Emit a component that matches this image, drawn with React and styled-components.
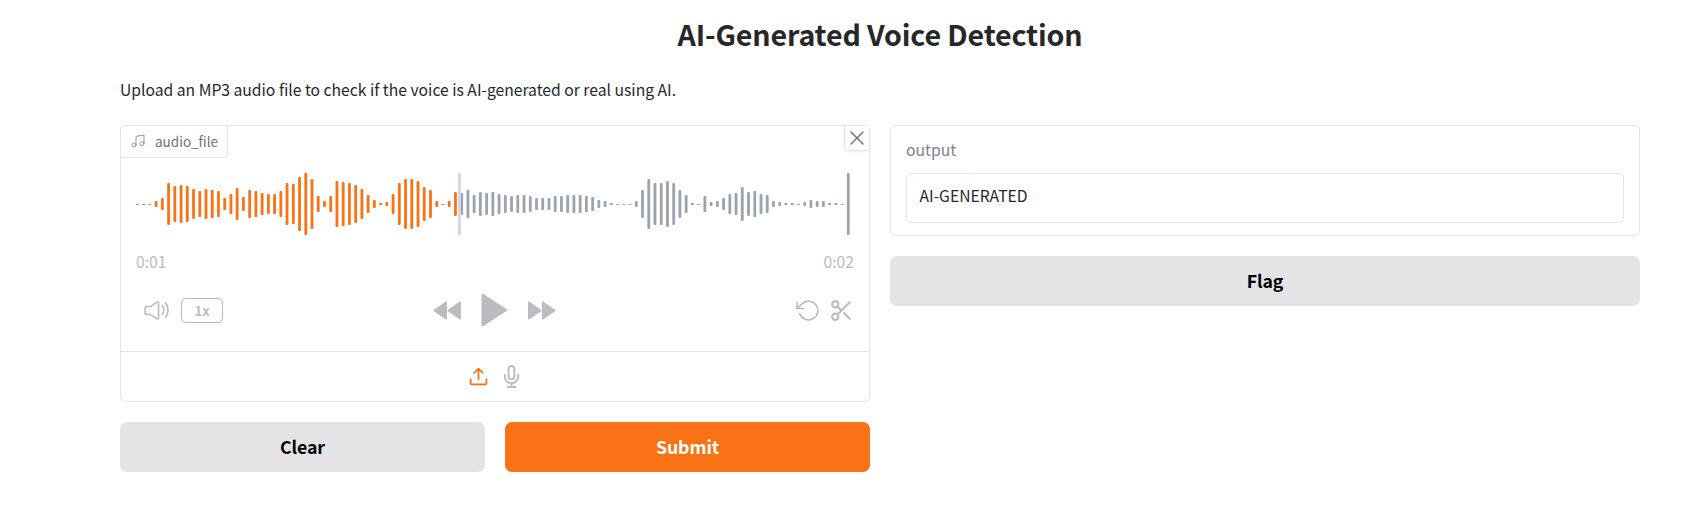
import React from "react";
import styled, { createGlobalStyle } from "styled-components";

const Global = createGlobalStyle`
  * { box-sizing: border-box; }
  body {
    margin: 0;
    background: #fff;
    color: #27272a;
    font-family: "Source Sans Pro", "Noto Sans CJK SC", "Noto Sans", sans-serif;
  }
  svg { display: block; flex: none; }
`;

const Page = styled.main`
  width: 1520px;
  margin-left: 120px;
  padding-top: 13px;
`;
const Title = styled.h1`
  margin: 0;
  height: 42px;
  line-height: 42px;
  text-align: center;
  font-size: 28.6px;
  font-weight: 600;
  letter-spacing: -0.14px;
`;
const Description = styled.p`
  margin: 22px 0 0;
  height: 26px;
  line-height: 26px;
  font-size: 15.68px;
`;
const Columns = styled.div`
  display: flex;
  align-items: flex-start;
  gap: 20px;
  margin-top: 22px;
`;
const Column = styled.section`
  flex: 1;
  display: flex;
  flex-direction: column;
  gap: 20px;
`;
const Card = styled.div`
  border: 1px solid #e4e4e7;
  border-radius: 5px;
  background: #fff;
`;
const AudioCard = styled(Card)`
  height: 277px;
  display: flex;
  flex-direction: column;
`;
const CardTop = styled.div`
  display: flex;
  justify-content: space-between;
  align-items: flex-start;
  height: 47px;
`;
const FileLabel = styled.div`
  display: flex;
  align-items: center;
  width: 107px;
  height: 32px;
  padding: 0 0 1px 9px;
  gap: 9px;
  border: solid #e4e4e7;
  border-width: 0 1px 1px 0;
  border-bottom-right-radius: 4px;
  color: #71717a;
  font-size: 13.5px;
  line-height: 20px;
  white-space: nowrap;
`;
const CloseButton = styled.button`
  display: flex;
  align-items: center;
  justify-content: center;
  width: 25px;
  height: 25px;
  padding: 0 1px 0 0;
  background: #fff;
  color: #6b6b74;
  border: solid #e4e4e7;
  border-width: 0 0 1px 1px;
  border-bottom-left-radius: 4px;
  box-shadow: 0 1px 3px rgba(0, 0, 0, 0.06);
`;
const Player = styled.div`
  height: 179px;
  padding: 0 15px;
  border-bottom: 1px solid #e4e4e7;
`;
const Times = styled.div`
  display: flex;
  justify-content: space-between;
  height: 24px;
  margin-top: 15px;
  line-height: 24px;
  font-size: 15.7px;
  color: #bbbbc2;
`;
const Controls = styled.div`
  display: grid;
  grid-template-columns: 1fr auto 1fr;
  align-items: center;
  height: 34px;
  margin-top: 19px;
  color: #bbbbc2;
`;
const ControlGroup = styled.div`
  display: flex;
  align-items: center;
  gap: ${(p) => p.$gap}px;
  justify-content: ${(p) => p.$align || "flex-start"};
  padding-left: ${(p) => p.$inset || 0}px;
  padding-right: ${(p) => p.$outset || 0}px;
`;
const Speed = styled.button`
  width: 42px;
  height: 25px;
  padding: 0;
  border: 1px solid #b6b6bd;
  border-radius: 5px;
  background: transparent;
  color: #bbbbc2;
  font: 700 13.2px/23px "Source Sans Pro", "Noto Sans CJK SC", sans-serif;
`;
const Sources = styled.div`
  flex: 1;
  display: flex;
  align-items: center;
  justify-content: center;
  gap: 11px;
  padding-bottom: 1px;
  color: #bbbbc2;
`;
const ButtonRow = styled.div`
  display: grid;
  grid-template-columns: 1fr 1fr;
  gap: 20px;
`;
const Button = styled.button`
  height: 50px;
  padding: 0 0 2px;
  border: 0;
  border-radius: 7px;
  background: ${(p) => (p.$primary ? "#f97316" : "#e4e4e7")};
  color: ${(p) => (p.$primary ? "#fff" : "#000")};
  font: 600 17.7px/48px "Source Sans Pro", "Noto Sans CJK SC", sans-serif;
  letter-spacing: -0.08px;
`;
const OutputCard = styled(Card)`
  height: 111px;
  padding: 12px 15px 0;
`;
const OutputLabel = styled.div`
  height: 24px;
  line-height: 24px;
  margin-bottom: 11px;
  font-size: 15.7px;
  color: #808089;
`;
const OutputValue = styled.div`
  height: 50px;
  padding: 9px 12.5px;
  border: 1px solid #e4e4e7;
  border-radius: 5px;
  font-size: 15.7px;
  line-height: 26px;
`;

const LEVELS = [
  1, 1, 1, 6, 12, 42, 36, 38, 36, 30, 26, 30, 28, 26, 12, 20, 32, 14, 28, 26,
  22, 20, 20, 26, 42, 40, 54, 62, 50, 16, 6, 16, 46, 44, 42, 38, 30, 18, 8, 2,
  4, 20, 42, 50, 50, 46, 34, 28, 6, 1, 6, 24, 22, 28, 18, 24, 22, 24, 20, 18,
  16, 18, 18, 16, 12, 12, 12, 16, 16, 18, 18, 18, 16, 14, 8, 6, 2, 1, 1, 1, 6,
  28, 50, 42, 42, 46, 42, 28, 18, 2, 1, 16, 4, 6, 12, 20, 22, 34, 24, 26, 20,
  18, 6, 4, 2, 2, 1, 4, 8, 6, 6, 2, 2, 1, 62,
];
const PLAYED = 52;

function Waveform() {
  return (
    <svg width="718" height="62" viewBox="0 0 718 62">
      {LEVELS.map((h, i) => (
        <rect
          key={i}
          x={i * 6.236}
          y={31 - Math.floor(h / 2)}
          width={2.8}
          height={h}
          rx={h > 2 ? 1 : 0}
          fill={i < PLAYED ? "#f97316" : "#9ca3af"}
        />
      ))}
      <rect x="322" y="0" width="3" height="62" rx="0.5" fill="#dcd3e8" />
    </svg>
  );
}

function LineIcon({ size, width = 1.5, color = "currentColor", children }) {
  return (
    <svg
      width={size}
      height={size}
      viewBox="0 0 24 24"
      fill="none"
      stroke={color}
      strokeWidth={width}
      strokeLinecap="round"
      strokeLinejoin="round"
    >
      {children}
    </svg>
  );
}

const MusicIcon = () => (
  <LineIcon size={16} color="#96969e">
    <path d="M9 18V5l12-2v13" />
    <circle cx="6" cy="18" r="3" />
    <circle cx="18" cy="16" r="3" />
  </LineIcon>
);
const CloseIcon = () => (
  <svg width="14" height="14" viewBox="0 0 14 14" stroke="currentColor" strokeWidth="1.4" strokeLinecap="round">
    <path d="M1 1l12 12M13 1L1 13" />
  </svg>
);
const VolumeIcon = () => (
  <LineIcon size={25}>
    <path d="M1 13.857V10.143a2 2 0 0 1 2-2h2.9a1 1 0 0 0 .55-.165l6-3.956A1 1 0 0 1 14 4.857v14.286a1 1 0 0 1-1.55.835l-6-3.956a1 1 0 0 0-.55-.165H3a2 2 0 0 1-2-2Z" />
    <path d="M17.5 7.5S19 9 19 11.5s-1.500 4-1.500 4" />
    <path d="M20.500 4.500S23 7 23 11.500s-2.500 7-2.500 7" />
  </LineIcon>
);
const RewindIcon = () => (
  <svg width="28" height="19" viewBox="0 0 28 19" fill="currentColor" stroke="currentColor" strokeWidth="2" strokeLinejoin="round">
    <path d="M13 1.500v16L1.500 9.500ZM27 1.500v16L15.500 9.500Z" />
  </svg>
);
const PlayIcon = () => (
  <svg width="27" height="34" viewBox="0 0 27 34" fill="currentColor" stroke="currentColor" strokeWidth="2" strokeLinejoin="round">
    <path d="M1.500 1.700v30.600L25.300 17Z" />
  </svg>
);
const ForwardIcon = () => (
  <svg width="28" height="19" viewBox="0 0 28 19" fill="currentColor" stroke="currentColor" strokeWidth="2" strokeLinejoin="round">
    <path d="M1 1.500v16L12.500 9.500ZM15 1.500v16L26.500 9.500Z" />
  </svg>
);
const UndoIcon = () => (
  <LineIcon size={25}>
    <path d="M1 4v6h6" />
    <path d="M3.510 15a9 9 0 1 0 2.130-9.360L1 10" />
  </LineIcon>
);
const TrimIcon = () => (
  <LineIcon size={25} width={2}>
    <circle cx="6" cy="6" r="3" />
    <circle cx="6" cy="18" r="3" />
    <path d="M20 4L8.120 15.880M14.470 14.480L20 20M8.120 8.120L12 12" />
  </LineIcon>
);
const UploadIcon = () => (
  <LineIcon size={21} width={2} color="#f97316">
    <path d="M21 15v4a2 2 0 0 1-2 2H5a2 2 0 0 1-2-2v-4M17 8l-5-5-5 5M12 3v12" />
  </LineIcon>
);
const MicIcon = () => (
  <LineIcon size={23} width={2}>
    <path d="M12 1a3 3 0 0 0-3 3v8a3 3 0 0 0 6 0V4a3 3 0 0 0-3-3z" />
    <path d="M19 10v2a7 7 0 0 1-14 0v-2M12 19v4M8 23h8" />
  </LineIcon>
);

export default function App() {
  return (
    <>
      <Global />
      <Page>
        <Title>AI-Generated Voice Detection</Title>
        <Description>
          Upload an MP3 audio file to check if the voice is AI-generated or real using AI.
        </Description>
        <Columns>
          <Column>
            <AudioCard>
              <CardTop>
                <FileLabel>
                  <MusicIcon />
                  audio_file
                </FileLabel>
                <CloseButton aria-label="Clear">
                  <CloseIcon />
                </CloseButton>
              </CardTop>
              <Player>
                <Waveform />
                <Times>
                  <span>0:01</span>
                  <span>0:02</span>
                </Times>
                <Controls>
                  <ControlGroup $gap={12} $inset={8}>
                    <VolumeIcon />
                    <Speed>1x</Speed>
                  </ControlGroup>
                  <ControlGroup $gap={20} $outset={1}>
                    <RewindIcon />
                    <PlayIcon />
                    <ForwardIcon />
                  </ControlGroup>
                  <ControlGroup $gap={8} $align="flex-end">
                    <UndoIcon />
                    <TrimIcon />
                  </ControlGroup>
                </Controls>
              </Player>
              <Sources>
                <UploadIcon />
                <MicIcon />
              </Sources>
            </AudioCard>
            <ButtonRow>
              <Button>Clear</Button>
              <Button $primary>Submit</Button>
            </ButtonRow>
          </Column>
          <Column>
            <OutputCard>
              <OutputLabel>output</OutputLabel>
              <OutputValue>AI-GENERATED</OutputValue>
            </OutputCard>
            <Button>Flag</Button>
          </Column>
        </Columns>
      </Page>
    </>
  );
}
